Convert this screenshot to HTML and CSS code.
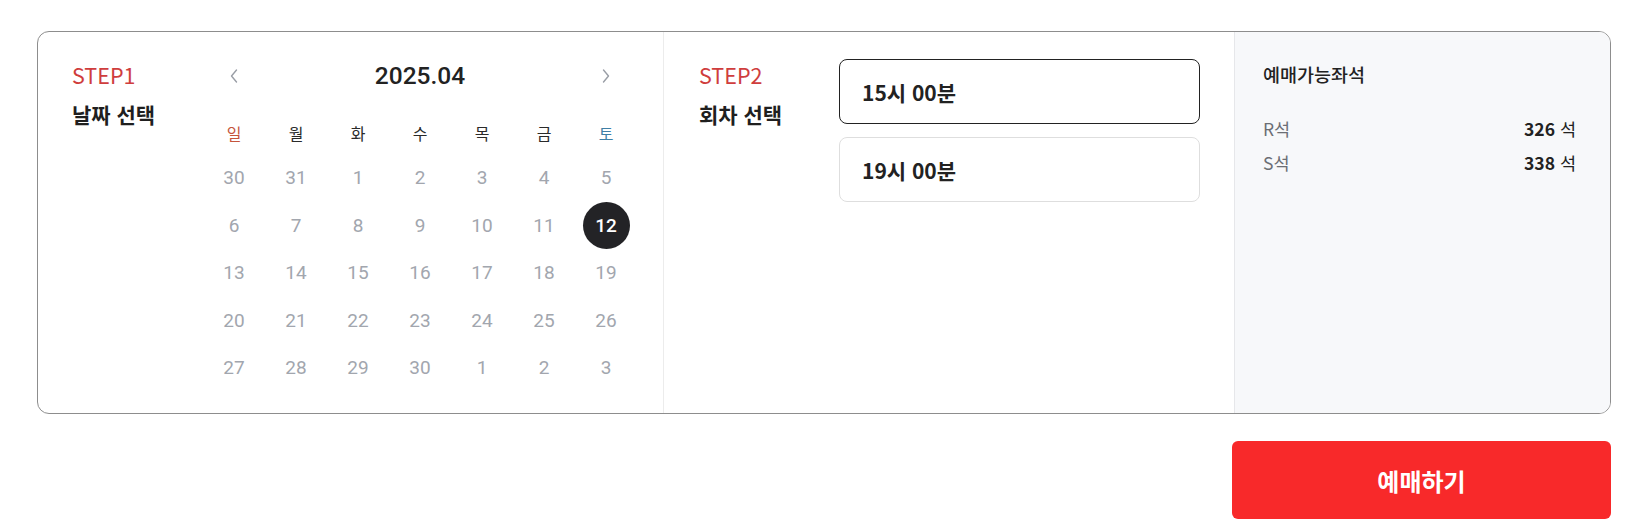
FILE: index.html
```html
<!DOCTYPE html>
<html lang="ko">
<head>
<meta charset="utf-8">
<title>예매</title>
<link rel="stylesheet" href="styles.css">
</head>
<body>
<div class="page">
  <div class="card">
    <section class="col col-date">
      <div class="step step-1">
        <p class="step-no">STEP1</p>
        <p class="step-title">날짜 선택</p>
      </div>
      <div class="calendar">
        <div class="cal-head">
          <button class="nav" aria-label="이전 달"><svg width="10" height="16" viewBox="0 0 10 16"><polyline points="7.5,2 2.5,8 7.5,14" fill="none" stroke="#9a9ea6" stroke-width="1.4" stroke-linecap="round" stroke-linejoin="round"/></svg></button>
          <h2 class="month">2025.04</h2>
          <button class="nav" aria-label="다음 달"><svg width="10" height="16" viewBox="0 0 10 16"><polyline points="2.5,2 7.5,8 2.5,14" fill="none" stroke="#9a9ea6" stroke-width="1.4" stroke-linecap="round" stroke-linejoin="round"/></svg></button>
        </div>
        <div class="weekdays">
          <span class="sun">일</span><span>월</span><span>화</span><span>수</span><span>목</span><span>금</span><span class="sat">토</span>
        </div>
        <div class="dates">
          <span class="day">30</span><span class="day">31</span><span class="day">1</span><span class="day">2</span><span class="day">3</span><span class="day">4</span><span class="day">5</span>
          <span class="day">6</span><span class="day">7</span><span class="day">8</span><span class="day">9</span><span class="day">10</span><span class="day">11</span><span class="day selected"><b>12</b></span>
          <span class="day">13</span><span class="day">14</span><span class="day">15</span><span class="day">16</span><span class="day">17</span><span class="day">18</span><span class="day">19</span>
          <span class="day">20</span><span class="day">21</span><span class="day">22</span><span class="day">23</span><span class="day">24</span><span class="day">25</span><span class="day">26</span>
          <span class="day">27</span><span class="day">28</span><span class="day">29</span><span class="day">30</span><span class="day">1</span><span class="day">2</span><span class="day">3</span>
        </div>
      </div>
    </section>

    <section class="col col-time">
      <div class="step step-2">
        <p class="step-no">STEP2</p>
        <p class="step-title">회차 선택</p>
      </div>
      <div class="times">
        <button class="time active">15시 00분</button>
        <button class="time">19시 00분</button>
      </div>
    </section>

    <section class="col col-seat">
      <h3 class="seat-title">예매가능좌석</h3>
      <ul class="seat-list">
        <li><span class="grade">R석</span><span class="count"><b>326</b> 석</span></li>
        <li><span class="grade">S석</span><span class="count"><b>338</b> 석</span></li>
      </ul>
    </section>
  </div>

  <div class="actions">
    <button class="book">예매하기</button>
  </div>
</div>
</body>
</html>
```

FILE: styles.css
```css
* { box-sizing: border-box; }

html, body {
  margin: 0;
  padding: 0;
  background: #ffffff;
}

body {
  font-family: "Noto Sans CJK KR", "Noto Sans", sans-serif;
  color: #222222;
}

p, h2, h3, ul { margin: 0; padding: 0; }
ul { list-style: none; }

button {
  font-family: inherit;
  border: 0;
  background: none;
  padding: 0;
  cursor: pointer;
}

.page {
  padding: 31px 23px 0 37px;
}

.card {
  display: grid;
  grid-template-columns: 626px 571px 1fr;
  border: 1px solid #8d8d8d;
  border-radius: 12px;
  overflow: hidden;
  background: #ffffff;
}

.col {
  min-width: 0;
}

/* STEP labels */
.step-no {
  font-size: 21.5px;
  line-height: 31px;
  font-weight: 400;
  color: #cf3d3d;
}

.step-title {
  margin-top: 10px;
  font-size: 21px;
  line-height: 28px;
  font-weight: 700;
  color: #1f1f1f;
}

/* Column 1: date */
.col-date {
  display: flex;
  padding: 22px 26px 21.5px 34px;
  border-right: 1px solid #ececec;
}

.step-1 {
  width: 131px;
  padding-top: 5px;
  flex: none;
}

.calendar {
  width: 434px;
  flex: none;
  font-family: Roboto, "Noto Sans CJK KR", sans-serif;
}

.cal-head {
  display: grid;
  grid-template-columns: repeat(7, 1fr);
  height: 40px;
  margin-top: 2px;
  align-items: center;
}

.nav {
  display: flex;
  justify-content: center;
  align-items: center;
  height: 40px;
}

.month {
  grid-column: 2 / span 5;
  text-align: center;
  font-size: 24.5px;
  font-weight: 500;
  color: #222222;
  line-height: 40px;
}

.weekdays {
  display: grid;
  grid-template-columns: repeat(7, 1fr);
  height: 40px;
  margin-top: 17px;
  align-items: center;
  text-align: center;
  font-family: "Noto Sans CJK KR", sans-serif;
  font-size: 16px;
  color: #2a2a2a;
}

.weekdays .sun { color: #c5553c; }
.weekdays .sat { color: #3f7fa6; }

.dates {
  display: grid;
  grid-template-columns: repeat(7, 1fr);
  grid-auto-rows: 47.5px;
  margin-top: 1px;
}

.day {
  display: flex;
  justify-content: center;
  align-items: center;
  font-size: 19px;
  color: #a2a6ae;
}

.day.selected b {
  display: flex;
  justify-content: center;
  align-items: center;
  width: 47px;
  height: 47px;
  border-radius: 50%;
  background: #232326;
  color: #ffffff;
  font-weight: 500;
}

/* Column 2: time */
.col-time {
  display: flex;
  padding: 27px 34px 0 35px;
  border-right: 1px solid #e6e7ea;
}

.step-2 {
  width: 140px;
  flex: none;
}

.times {
  display: flex;
  flex-direction: column;
  gap: 13px;
  width: 361px;
}

.time {
  height: 65px;
  padding: 0 22px;
  text-align: left;
  border: 1px solid #dedede;
  border-radius: 8px;
  background: #ffffff;
  font-size: 21px;
  font-weight: 700;
  color: #222222;
}

.time.active {
  border-color: #222222;
}

/* Column 3: seats */
.col-seat {
  background: #f7f8fa;
  padding: 28.5px 34px 0 28px;
}

.seat-title {
  font-size: 18.5px;
  line-height: 26px;
  font-weight: 500;
  color: #222222;
}

.seat-list {
  margin-top: 29.5px;
  display: flex;
  flex-direction: column;
  gap: 9px;
}

.seat-list li {
  display: flex;
  justify-content: space-between;
  align-items: baseline;
  font-size: 17.5px;
  line-height: 25px;
}

.grade { color: #6b6e74; }

.count {
  color: #222222;
  font-size: 17.5px;
}

.count b { font-weight: 700; }

/* Button */
.actions {
  display: flex;
  justify-content: flex-end;
  margin-top: 27px;
}

.book {
  width: 379px;
  height: 78px;
  border-radius: 6px;
  background: #f8292a;
  color: #ffffff;
  font-size: 24px;
  font-weight: 700;
}
```
